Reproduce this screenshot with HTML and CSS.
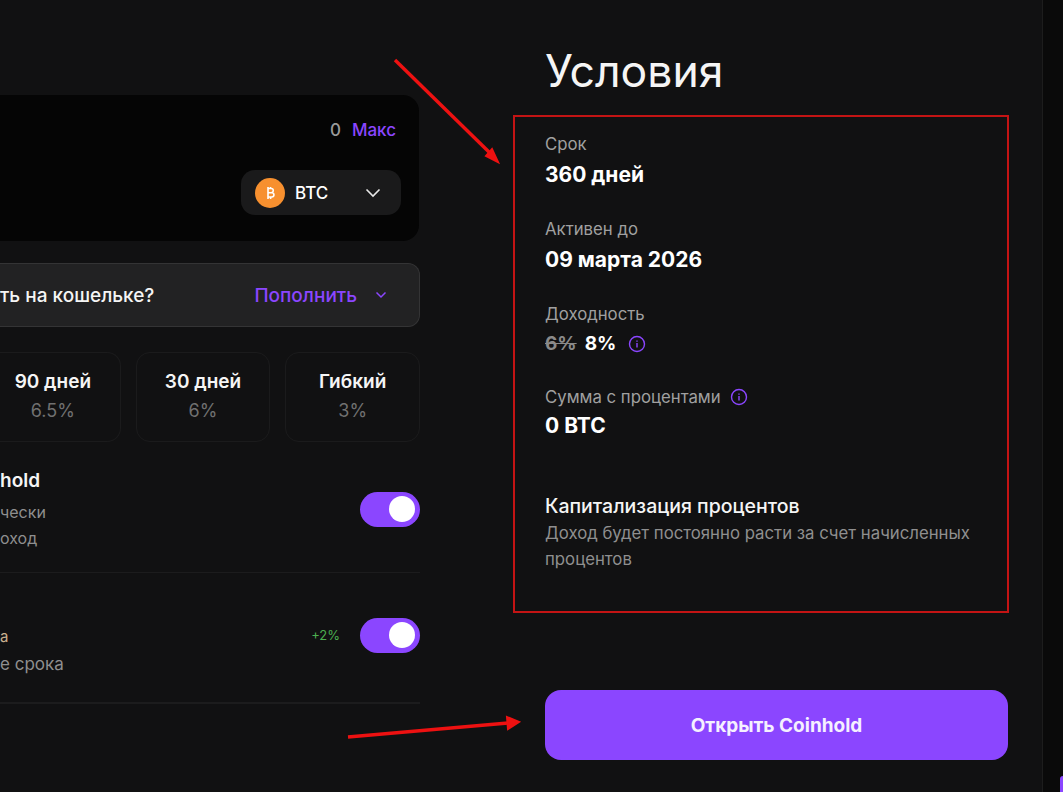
FILE: index.html
```html
<!DOCTYPE html>
<html lang="ru">
<head>
    <meta charset="UTF-8">
    <title>Coinhold</title>
    <link rel="stylesheet" href="styles.css">
</head>
<body>

<div class="page">
    <div class="form-col">
        <div class="amount-box">
            <div class="balance"><span class="balance-num">0</span><span class="max-link">Макс</span></div>
            <div class="coin-select">
                <span class="coin-icon">
                    <svg width="12" height="14" viewBox="0 0 12 14"><path d="M4 2.5h3.2a2 2 0 0 1 0 4.2H4zM4 6.7h3.8a2.1 2.1 0 0 1 0 4.3H4zM4 1v2M6.6 1v1.5M4 11v2M6.6 11v2" fill="none" stroke="#fff" stroke-width="1.6"/></svg>
                </span>
                <span class="coin-name">BTC</span>
                <svg class="coin-arrow" width="16" height="10" viewBox="0 0 16 10"><path d="M1.5 1.5L8 8l6.5-6.5" fill="none" stroke="#e8e8e8" stroke-width="1.6"/></svg>
            </div>
        </div>

        <div class="topup-row">
            <span class="topup-text">ть на кошельке?</span>
            <span class="topup-link">Пополнить</span>
            <svg class="topup-arrow" width="12" height="8" viewBox="0 0 12 8"><path d="M1.5 1.5L6 6l4.5-4.5" fill="none" stroke="#8b46ff" stroke-width="1.5"/></svg>
        </div>

        <div class="terms">
            <div class="term term-cut"><b>90 дней</b><span>6.5%</span></div>
            <div class="term"><b>30 дней</b><span>6%</span></div>
            <div class="term"><b>Гибкий</b><span>3%</span></div>
        </div>

        <div class="option option-first">
            <div class="option-text">
                <div class="option-title">hold</div>
                <div class="option-desc">чески<br>оход</div>
            </div>
            <div class="toggle"><i></i></div>
        </div>

        <div class="option option-second">
            <div class="option-text">
                <div class="option-accent">а</div>
                <div class="option-desc">е срока</div>
            </div>
            <span class="bonus">+2%</span>
            <div class="toggle"><i></i></div>
        </div>
    </div>

    <div class="info-col">
        <h1>Условия</h1>

        <div class="info-item">
            <div class="info-label">Срок</div>
            <div class="info-value">360 дней</div>
        </div>
        <div class="info-item">
            <div class="info-label">Активен до</div>
            <div class="info-value">09 марта 2026</div>
        </div>
        <div class="info-item item-rate">
            <div class="info-label">Доходность</div>
            <div class="info-value">
                <s>6%</s> 8%
                <svg class="info-icon" width="18" height="18" viewBox="0 0 18 18"><circle cx="9" cy="9" r="7.5" fill="none" stroke="#8b46ff" stroke-width="1.4"/><path d="M9 8v4.5M9 5.5v1.3" stroke="#8b46ff" stroke-width="1.4"/></svg>
            </div>
        </div>
        <div class="info-item item-sum">
            <div class="info-label">Сумма с процентами
                <svg class="info-icon" width="18" height="18" viewBox="0 0 18 18"><circle cx="9" cy="9" r="7.5" fill="none" stroke="#8b46ff" stroke-width="1.4"/><path d="M9 8v4.5M9 5.5v1.3" stroke="#8b46ff" stroke-width="1.4"/></svg>
            </div>
            <div class="info-value">0 BTC</div>
        </div>

        <div class="capital">
            <div class="capital-title">Капитализация процентов</div>
            <div class="capital-desc">Доход будет постоянно расти за счет начисленных процентов</div>
        </div>

        <button class="open-btn">Открыть Coinhold</button>
    </div>
</div>

<!-- red marks on top of the screenshot -->
<div class="red-frame"></div>
<svg class="marks" width="1063" height="792" viewBox="0 0 1063 792">
    <path d="M395 60L490 153" stroke="#ee1111" stroke-width="3.4" fill="none"/>
    <path d="M498 162L486 156L492 149Z" fill="#ee1111" stroke="#ee1111" stroke-width="2"/>
    <path d="M348 737L508 723" stroke="#ee1111" stroke-width="3.4" fill="none"/>
    <path d="M519 722L507 717L508 729Z" fill="#ee1111" stroke="#ee1111" stroke-width="2"/>
</svg>
<div class="chat-bubble"></div>

</body>
</html>
```

FILE: styles.css
```css
html, body {
    margin: 0;
    height: 100%;
    overflow: hidden;
}

body {
    background-color: #0a0a0a;
    font-family: Inter, "Noto Sans", sans-serif;
    color: #f5f5f5;
}

.page {
    display: flex;
    width: 1043px;
    height: 792px;
    box-sizing: border-box;
    padding-right: 34px;
    gap: 125px;
    background-color: #111112;
    border-right: 1px solid #1d1d1d;
}

/* left column, cut off by the window edge */
.form-col {
    width: 420px;
    flex-shrink: 0;
    padding-top: 95px;
    box-sizing: border-box;
}

.amount-box {
    display: flex;
    flex-direction: column;
    align-items: flex-end;
    height: 146px;
    margin-right: 1px;
    padding: 24px 18px 0 0;
    box-sizing: border-box;
    background-color: #050505;
    border-radius: 0 16px 16px 0;
}

.balance {
    display: flex;
    gap: 11px;
    margin-right: 5px;
    font-size: 17px;
    line-height: 22px;
    font-weight: 500;
}

.balance-num {
    color: #9a9a9a;
}

.max-link {
    color: #8b46ff;
}

.coin-select {
    display: flex;
    align-items: center;
    width: 160px;
    height: 45px;
    margin-top: 29px;
    padding-left: 14px;
    box-sizing: border-box;
    background-color: #1a1a1b;
    border-radius: 14px;
}

.coin-icon {
    display: flex;
    align-items: center;
    justify-content: center;
    width: 30px;
    height: 30px;
    border-radius: 50%;
    background-color: #f7902f;
}

.coin-name {
    margin-left: 10px;
    font-size: 17px;
    font-weight: 500;
    color: #fff;
}

.coin-arrow {
    margin-left: auto;
    margin-right: 20px;
}

.topup-row {
    display: flex;
    align-items: center;
    height: 64px;
    margin-top: 22px;
    box-sizing: border-box;
    background-color: #222223;
    border: 1px solid #343435;
    border-left: none;
    border-radius: 0 12px 12px 0;
}

.topup-text {
    font-size: 19px;
    font-weight: 500;
    color: #f5f5f5;
}

.topup-link {
    margin-left: auto;
    font-size: 19px;
    font-weight: 500;
    color: #8b46ff;
}

.topup-arrow {
    margin: 0 32px 0 18px;
}

.terms {
    display: flex;
    gap: 15px;
    margin-top: 25px;
}

.term {
    display: flex;
    flex-direction: column;
    align-items: center;
    width: 135px;
    height: 90px;
    box-sizing: border-box;
    padding-top: 17px;
    border: 1px solid #1b1b1c;
    border-radius: 14px;
}

/* first card is cut by the window edge */
.term-cut {
    width: 121px;
    padding-right: 14px;
    border-left: none;
    border-radius: 0 14px 14px 0;
}

.term b {
    font-size: 19px;
    line-height: 24px;
    font-weight: 600;
}

.term span {
    margin-top: 6px;
    font-size: 18px;
    line-height: 22px;
    color: #707070;
}

.option {
    display: flex;
    align-items: center;
    box-sizing: border-box;
}

.option-first {
    height: 131px;
    border-bottom: 1px solid #1c1c1d;
    padding-top: 4px;
}

.option-first .option-desc {
    margin-top: 5px;
    font-size: 16px;
    line-height: 26px;
}

.option-second {
    height: 131px;
    border-bottom: 2px solid #1c1c1d;
    padding-bottom: 5px;
}

.option-text {
    margin-right: auto;
}

.option-second .option-text {
    padding-top: 32px;
}

.option-title {
    font-size: 19px;
    line-height: 26px;
    font-weight: 600;
}

.option-accent {
    font-size: 15px;
    line-height: 24px;
    color: #c9b08f;
}

.option-desc {
    margin-top: 2px;
    font-size: 17px;
    line-height: 27px;
    color: #8f8f8f;
}

.bonus {
    margin-right: 20px;
    font-size: 13px;
    color: #4caf50;
}

.toggle {
    display: flex;
    align-items: center;
    justify-content: flex-end;
    width: 60px;
    height: 35px;
    padding-right: 5px;
    box-sizing: border-box;
    background-color: #8b46ff;
    border-radius: 18px;
}

.toggle i {
    width: 26px;
    height: 26px;
    border-radius: 50%;
    background-color: #fff;
}

/* right column */
.info-col {
    flex: 1;
    display: flex;
    flex-direction: column;
    padding-top: 43px;
    box-sizing: border-box;
}

h1 {
    margin: 0 0 31px 0;
    font-size: 44.5px;
    line-height: 56px;
    font-weight: 400;
}

.info-item {
    height: 85px;
}

.item-rate {
    height: 83px;
}

.item-sum {
    height: 94px;
}

.info-label {
    display: flex;
    align-items: center;
    gap: 9px;
    font-size: 16.75px;
    line-height: 28px;
    color: #a0a0a0;
}

.info-value {
    display: flex;
    align-items: center;
    gap: 8px;
    margin-top: 2px;
    font-size: 21px;
    line-height: 30px;
    font-weight: 700;
    color: #fff;
}

.item-rate .info-value {
    margin-top: 1px;
    font-size: 19px;
}

.item-rate .info-icon {
    margin-left: 4px;
}

.item-sum .info-value {
    margin-top: 0;
}

.info-value s {
    color: #8a8a8a;
}

.capital {
    margin-top: 16px;
}

.capital-title {
    font-size: 19.5px;
    line-height: 26px;
    font-weight: 500;
}

.capital-desc {
    margin-top: 1px;
    font-size: 16.75px;
    line-height: 26px;
    color: #8f8f8f;
}

.open-btn {
    height: 70px;
    margin-top: 118px;
    border: none;
    border-radius: 16px;
    background-color: #8b46ff;
    color: #f5f0ff;
    font-family: inherit;
    font-size: 19px;
    font-weight: 700;
    cursor: pointer;
}

.red-frame {
    position: absolute;
    left: 513px;
    top: 115px;
    width: 496px;
    height: 498px;
    box-sizing: border-box;
    border: 2px solid #c41414;
}

.marks {
    position: absolute;
    left: 0;
    top: 0;
}

/* sliver of the chat button in the corner */
.chat-bubble {
    position: absolute;
    left: 1060px;
    top: 776px;
    width: 3px;
    height: 16px;
    border-radius: 3px 0 0 0;
    background-color: #8b46ff;
}
```
